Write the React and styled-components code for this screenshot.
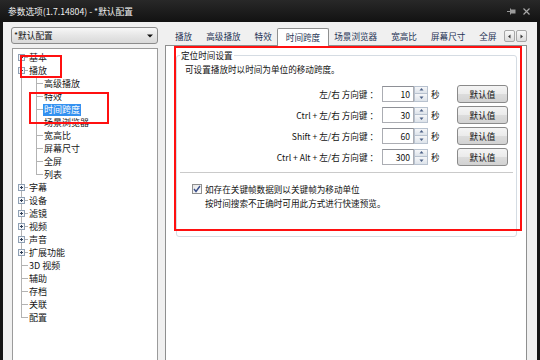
import React from 'react';
import styled, { createGlobalStyle } from 'styled-components';

const GlobalStyle = createGlobalStyle`
  html, body {
    margin: 0;
    padding: 0;
    background: #161616;
  }
  body {
    font-family: "Noto Sans CJK SC", "Noto Sans", sans-serif;
    color: #111;
  }
  * { box-sizing: border-box; }
`;

const Window = styled.div`
  position: relative;
  width: 540px;
  height: 360px;
  overflow: hidden;
  background: #151515;
  display: flex;
  flex-direction: column;
`;

const TitleBar = styled.div`
  flex: none;
  height: 22px;
  display: flex;
  align-items: center;
  padding: 0 8px;
  color: #f0f0f0;
  font-size: 8.7px;
  background: linear-gradient(#282828, #121212);
`;

const Title = styled.div`
  flex: 1;
  white-space: nowrap;
`;

const TitleIcons = styled.div`
  display: flex;
  align-items: center;
  gap: 7px;
  margin-right: 2px;
`;

const Client = styled.div`
  flex: none;
  height: 360px;
  margin: 0 3px;
  background: #f0f0f0;
  display: flex;
  gap: 7px;
  padding: 5px 10px 0 8px;
`;

const LeftColumn = styled.div`
  width: 147px;
  flex: none;
  display: flex;
  flex-direction: column;
  gap: 4px;
`;

const Combo = styled.div`
  height: 17px;
  display: flex;
  align-items: center;
  justify-content: space-between;
  padding: 0 4px 0 2px;
  font-size: 8.7px;
  border: 1px solid #8c8c8c;
  border-radius: 3px;
  background: linear-gradient(#f7f7f7, #e6e6e6 50%, #d9d9d9);
`;

const Tree = styled.div`
  flex: 1;
  margin-left: 1px;
  background: #fff;
  border: 1px solid #9b9b9b;
  padding-top: 2px;
`;

const TreeRow = styled.div`
  height: 13px;
  display: flex;
  align-items: center;
  font-size: 9px;
`;

const vSize = { full: '1px 13px', top: '1px 7px', bottom: '1px 7px', none: '0 0' };
const vPos = { full: '8px 0', top: '8px 0', bottom: '8px 6px', none: '0 0' };

const Guide = styled.span`
  flex: none;
  width: 15px;
  height: 13px;
  display: flex;
  align-items: center;
  background-image: linear-gradient(#b3b3b3, #b3b3b3), linear-gradient(#b3b3b3, #b3b3b3);
  background-repeat: no-repeat;
  background-size: ${({ $v }) => vSize[$v]}, ${({ $h }) => ($h ? '7px 1px' : '0 0')};
  background-position: ${({ $v }) => vPos[$v]}, 8px 6px;
`;

const Expander = styled.svg`
  margin-left: 5px;
  display: block;
`;

const TreeLabel = styled.span`
  padding: 0 1px;
  line-height: 12px;
  white-space: nowrap;
  color: ${({ $selected }) => ($selected ? '#fff' : '#151515')};
  background: ${({ $selected }) => ($selected ? '#3491f0' : 'transparent')};
`;

const RightColumn = styled.div`
  flex: 1;
  min-width: 0;
  display: flex;
  flex-direction: column;
`;

const TabStrip = styled.div`
  position: relative;
  z-index: 1;
  height: 19px;
  display: flex;
  align-items: flex-start;
`;

const Tabs = styled.div`
  flex: 1;
  min-width: 0;
  height: 19px;
  display: flex;
  align-items: flex-start;
  overflow: hidden;
  padding-left: 3px;
`;

const Tab = styled.div`
  flex: none;
  white-space: nowrap;
  font-size: 8.6px;
  color: #1f3456;
  display: flex;
  align-items: center;
  height: ${({ $active }) => ($active ? '18px' : '17px')};
  margin: ${({ $active }) => ($active ? '1px -2px 0' : '0')};
  padding: ${({ $active }) => ($active ? '0 8px 1px' : '0 7px 0')};
  background: ${({ $active }) => ($active ? '#fff' : 'transparent')};
  border: ${({ $active }) => ($active ? '1px solid #8e8f8f' : 'none')};
  border-bottom: none;
  border-radius: 2px 2px 0 0;
`;

const ScrollButtons = styled.div`
  flex: none;
  display: flex;
  gap: 1px;
  margin: 3px 0 0 0;
`;

const ScrollButton = styled.div`
  width: 11px;
  height: 12px;
  display: flex;
  align-items: center;
  justify-content: center;
  border: 1px solid #a7a7a7;
  border-radius: 2px;
  background: linear-gradient(#f8f8f8, #dcdcdc);
`;

const Panel = styled.div`
  flex: 1;
  margin-top: -1px;
  background: #fff;
  border: 1px solid #8e8f8f;
  padding: 3px 9px 0 10px;
`;

const GroupBox = styled.fieldset`
  margin: 0;
  padding: 0 0 26px;
  border: 1px solid #d5dce3;
  border-radius: 3px;
  font-size: 8.6px;
`;

const Legend = styled.legend`
  margin-left: 3px;
  padding: 0 1px;
  line-height: 12px;
`;

const Description = styled.div`
  margin: 2px 0 0 8px;
  line-height: 12px;
`;

const Rows = styled.div`
  margin-top: 8px;
  display: flex;
  flex-direction: column;
`;

const Row = styled.div`
  height: 21px;
  display: flex;
  align-items: center;
`;

const KeyLabel = styled.div`
  width: 201px;
  text-align: right;
  white-space: nowrap;
  margin-right: 4px;
`;

const Spin = styled.div`
  display: flex;
  height: 16px;
`;

const NumberBox = styled.div`
  width: 32px;
  height: 16px;
  border: 1px solid #abadb3;
  border-top-color: #8e9096;
  background: #fff;
  text-align: right;
  padding-right: 3px;
  line-height: 14px;
`;

const SpinButtons = styled.div`
  width: 14px;
  display: flex;
  flex-direction: column;
`;

const SpinButton = styled.div`
  flex: 1;
  display: flex;
  align-items: center;
  justify-content: center;
  border: 1px solid #b8c2cf;
  border-top-width: ${({ $down }) => ($down ? '0' : '1px')};
  background: linear-gradient(#f6f7f9, #dde3ea);
`;

const Unit = styled.span`
  margin-left: 3px;
  width: 9px;
`;

const DefaultButton = styled.button`
  margin-left: 17px;
  width: 51px;
  height: 18px;
  padding: 0;
  font: inherit;
  color: #111;
  border: 1px solid #8a8a8a;
  border-radius: 3px;
  background: linear-gradient(#f4f4f4, #ebebeb 50%, #dcdcdc 51%, #d2d2d2);
`;

const Separator = styled.div`
  margin: 5px 3px 0;
  height: 1px;
  background: #cacaca;
`;

const CheckRow = styled.label`
  margin: 9px 0 0 15px;
  height: 14px;
  display: flex;
  align-items: center;
  gap: 3px;
`;

const CheckBox = styled.span`
  width: 10px;
  height: 10px;
  display: flex;
  align-items: center;
  justify-content: center;
  border: 1px solid #8f8f8f;
  background: linear-gradient(135deg, #e6e6e6, #fff);
`;

const Hint = styled.div`
  margin-left: 28px;
  height: 14px;
  line-height: 14px;
`;

const Annotation = styled.div`
  position: absolute;
  border: 2px solid #ff1010;
  pointer-events: none;
  z-index: 5;
`;

const treeItems = [
  { label: '基本', exp: 'plus', v: 'bottom' },
  { label: '播放', exp: 'minus' },
  { label: '高级播放', child: true },
  { label: '特效', child: true },
  { label: '时间跨度', child: true, selected: true },
  { label: '场景浏览器', child: true },
  { label: '宽高比', child: true },
  { label: '屏幕尺寸', child: true },
  { label: '全屏', child: true },
  { label: '列表', child: true, last: true },
  { label: '字幕', exp: 'plus' },
  { label: '设备', exp: 'plus' },
  { label: '滤镜', exp: 'plus' },
  { label: '视频', exp: 'plus' },
  { label: '声音', exp: 'plus' },
  { label: '扩展功能', exp: 'plus' },
  { label: '3D 视频' },
  { label: '辅助' },
  { label: '存档' },
  { label: '关联' },
  { label: '配置', v: 'top' },
];

const tabs = ['播放', '高级播放', '特效', '时间跨度', '场景浏览器', '宽高比', '屏幕尺寸', '全屏'];

const keyRows = [
  { label: '左/右 方向键 ：', value: 10 },
  { label: 'Ctrl + 左/右 方向键 ：', value: 30 },
  { label: 'Shift + 左/右 方向键 ：', value: 60 },
  { label: 'Ctrl + Alt + 左/右 方向键 ：', value: 300 },
];

const ExpanderBox = ({ type }) => (
  <Expander width="7" height="7" viewBox="0 0 7 7">
    <rect x="0.5" y="0.5" width="6" height="6" fill="#f4f6f9" stroke="#8fa0b4" />
    <line x1="2" y1="3.5" x2="5" y2="3.5" stroke="#2f3f58" />
    {type === 'plus' && <line x1="3.5" y1="2" x2="3.5" y2="5" stroke="#2f3f58" />}
  </Expander>
);

const TreeItem = ({ item }) => (
  <TreeRow>
    {item.child ? (
      <>
        <Guide $v="full" />
        <Guide $v={item.last ? 'top' : 'full'} $h />
      </>
    ) : (
      <Guide $v={item.v || 'full'} $h>
        {item.exp && <ExpanderBox type={item.exp} />}
      </Guide>
    )}
    <TreeLabel $selected={item.selected}>{item.label}</TreeLabel>
  </TreeRow>
);

const Arrow = ({ dir }) => (
  <svg width="5" height="5" viewBox="0 0 5 5">
    {dir === 'left' && <path d="M3.5 0.5 L1 2.5 L3.5 4.5 Z" fill="#3a3a3a" />}
    {dir === 'right' && <path d="M1.5 0.5 L4 2.5 L1.5 4.5 Z" fill="#3a3a3a" />}
    {dir === 'up' && <path d="M0.5 3.5 L2.5 1 L4.5 3.5 Z" fill="#4a5f85" />}
    {dir === 'down' && <path d="M0.5 1.5 L2.5 4 L4.5 1.5 Z" fill="#4a5f85" />}
  </svg>
);

export default function App() {
  return (
    <>
      <GlobalStyle />
      <Window>
        <TitleBar>
          <Title>参数选项(1.7.14804) - *默认配置</Title>
          <TitleIcons>
            <svg width="9" height="7" viewBox="0 0 9 7">
              <line x1="0" y1="3.5" x2="3" y2="3.5" stroke="#9a9a9a" />
              <line x1="3.5" y1="0.5" x2="3.5" y2="6.5" stroke="#9a9a9a" />
              <rect x="4" y="1.5" width="4.5" height="4" fill="#9a9a9a" />
            </svg>
            <svg width="7" height="7" viewBox="0 0 7 7">
              <path d="M0.5 0.5 L6.5 6.5 M6.5 0.5 L0.5 6.5" stroke="#a8a8a8" strokeWidth="1.2" />
            </svg>
          </TitleIcons>
        </TitleBar>

        <Client>
          <LeftColumn>
            <Combo>
              <span>*默认配置</span>
              <svg width="6" height="4" viewBox="0 0 6 4">
                <path d="M0 0.5 L6 0.5 L3 3.5 Z" fill="#111" />
              </svg>
            </Combo>
            <Tree>
              {treeItems.map((item) => (
                <TreeItem key={item.label} item={item} />
              ))}
            </Tree>
          </LeftColumn>

          <RightColumn>
            <TabStrip>
              <Tabs>
                {tabs.map((t) => (
                  <Tab key={t} $active={t === '时间跨度'}>
                    {t}
                  </Tab>
                ))}
              </Tabs>
              <ScrollButtons>
                <ScrollButton>
                  <Arrow dir="left" />
                </ScrollButton>
                <ScrollButton>
                  <Arrow dir="right" />
                </ScrollButton>
              </ScrollButtons>
            </TabStrip>

            <Panel>
              <GroupBox>
                <Legend>定位时间设置</Legend>
                <Description>可设置播放时以时间为单位的移动跨度。</Description>
                <Rows>
                  {keyRows.map((r) => (
                    <Row key={r.label}>
                      <KeyLabel>{r.label}</KeyLabel>
                      <Spin>
                        <NumberBox>{r.value}</NumberBox>
                        <SpinButtons>
                          <SpinButton>
                            <Arrow dir="up" />
                          </SpinButton>
                          <SpinButton $down>
                            <Arrow dir="down" />
                          </SpinButton>
                        </SpinButtons>
                      </Spin>
                      <Unit>秒</Unit>
                      <DefaultButton>默认值</DefaultButton>
                    </Row>
                  ))}
                </Rows>
                <Separator />
                <CheckRow>
                  <CheckBox>
                    <svg width="8" height="8" viewBox="0 0 8 8">
                      <path d="M1 4 L3 6.5 L7 1" fill="none" stroke="#3b4f8a" strokeWidth="1.4" />
                    </svg>
                  </CheckBox>
                  如存在关键帧数据则以关键帧为移动单位
                </CheckRow>
                <Hint>按时间搜索不正确时可用此方式进行快速预览。</Hint>
              </GroupBox>
            </Panel>
          </RightColumn>
        </Client>

        <Annotation style={{ left: 20, top: 55, width: 42, height: 23 }} />
        <Annotation style={{ left: 29, top: 92, width: 80, height: 32 }} />
        <Annotation style={{ left: 174, top: 46, width: 348, height: 185 }} />
      </Window>
    </>
  );
}
